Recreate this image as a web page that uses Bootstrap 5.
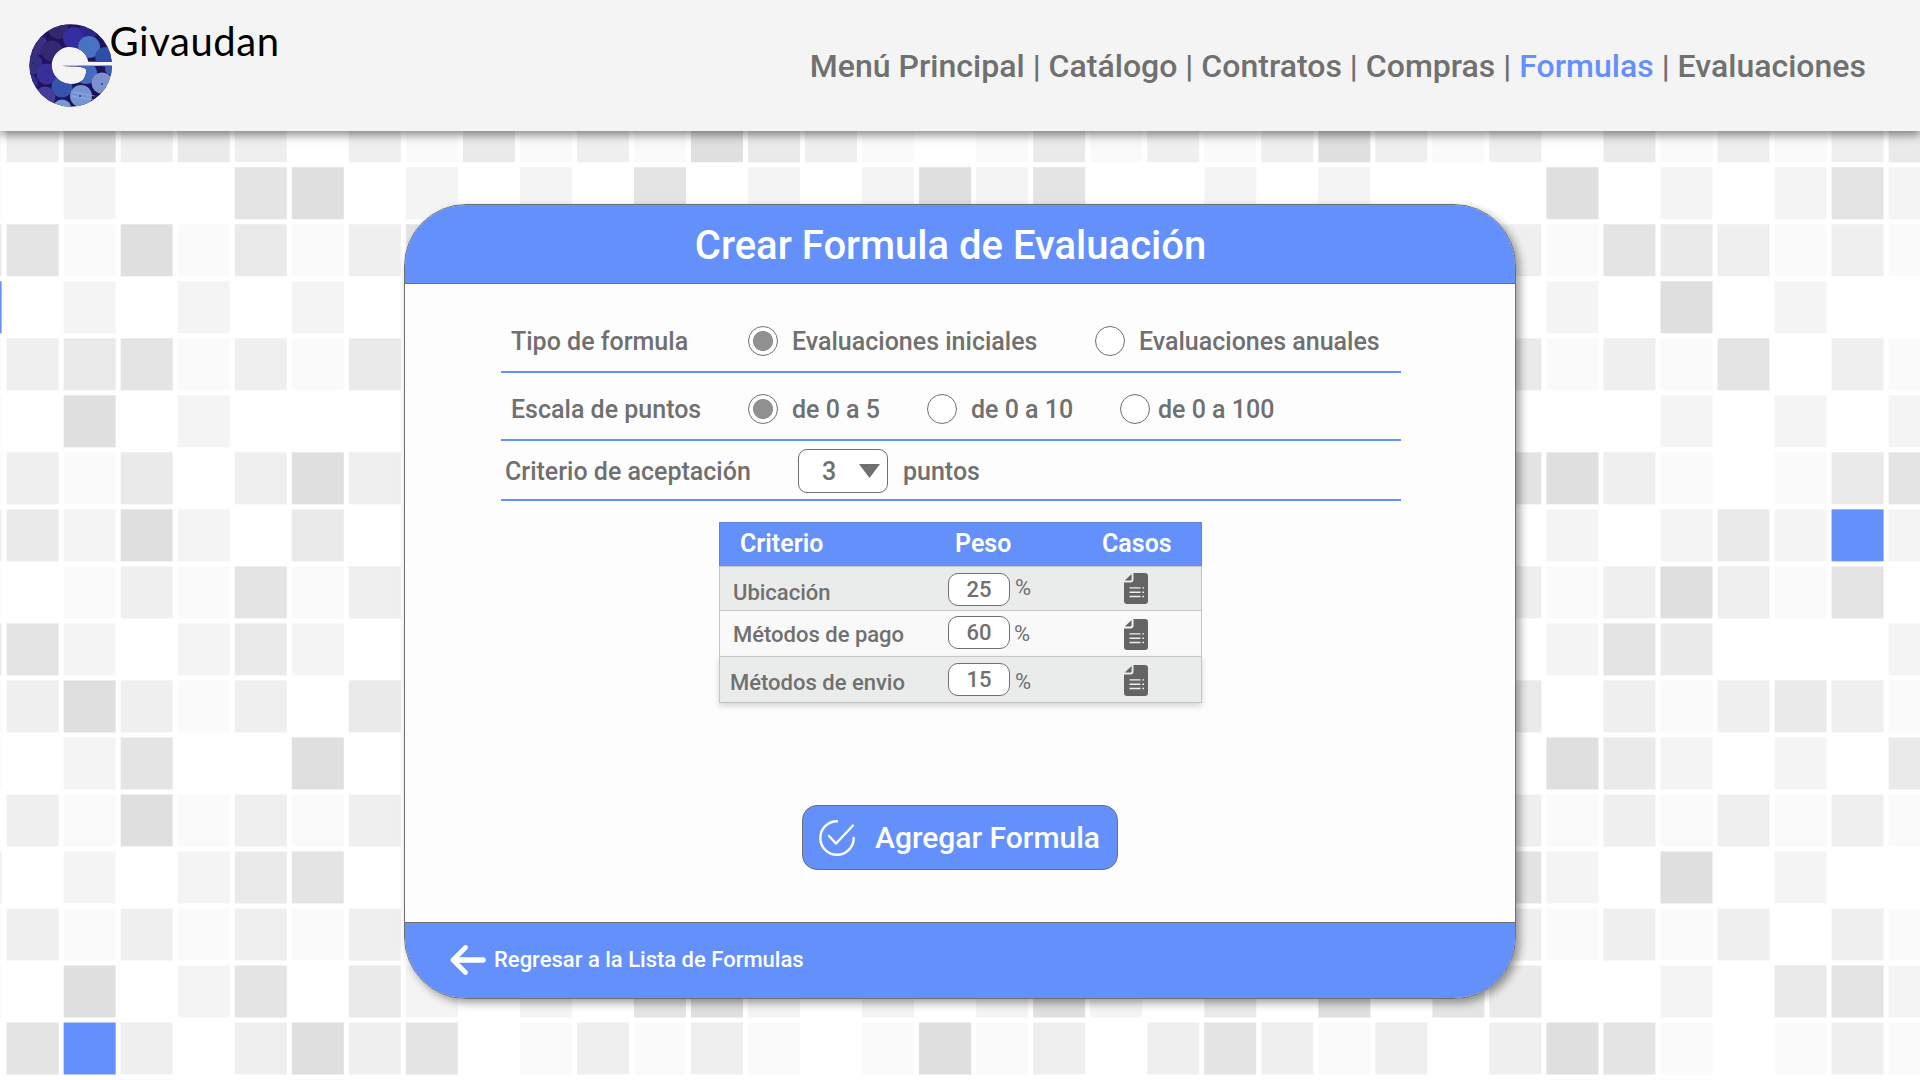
<!DOCTYPE html>
<html lang="es">
<head>
<meta charset="utf-8">
<meta name="viewport" content="width=device-width, initial-scale=1">
<title>Crear Formula de Evaluación</title>
<link href="https://cdn.jsdelivr.net/npm/bootstrap@5.3.0/dist/css/bootstrap.min.css" rel="stylesheet">
<style>
  :root { --brand: #6490fc; --ink: #707070; }
  body { width: 1920px; height: 1080px; overflow: hidden; background: #fff; color: var(--ink);
         font-family: Roboto, "Liberation Sans", sans-serif; font-weight: 500; }
  .mosaic { position: absolute; inset: 0; z-index: -1; }
  .topbar { height: 131px; background: #f4f4f4; padding: 0 54px 0 28px; box-shadow: 0 4px 9px rgba(0,0,0,.46); }
  .brand-logo { margin-top: 18px; }
  .menu { font-size: 32px; line-height: 40px; white-space: pre; letter-spacing: .016px; }
  .menu a { color: inherit; text-decoration: none; }
  .menu a.current { color: var(--brand); }
  .panel { width: 1112px; height: 795px; margin: 73px 0 0 404px; border: 1px solid var(--ink); border-radius: 62px;
           background: #fdfdfd; overflow: hidden; box-shadow: 4px 4px 8px rgba(0,0,0,.38); }
  .panel-top { height: 79px; background: var(--brand); border-bottom: 1px solid var(--ink); padding: 3px 19px 0 0; }
  .panel-top h1 { font-size: 40px; line-height: 48px; font-weight: 500; }
  .panel-bottom { height: 76px; background: var(--brand); border-top: 1px solid var(--ink); padding: 0 0 2px 45px; }
  .panel-bottom a { font-size: 22px; line-height: 28px; }
  .panel-main { padding: 27px 96px 0; }
  .field { width: 900px; border-bottom: 2px solid var(--brand); font-size: 25px; line-height: 30px; }
  .f1 { height: 62px; padding: 0 0 0 10px; }
  .f2 { height: 68px; padding: 6px 0 0 10px; }
  .f3 { height: 60px; padding: 2px 0 0 4px; }
  .f1 .caption, .f2 .caption { width: 237px; }
  .f3 .caption { width: 293px; }
  .txt { padding-top: 2px; }
  .dot { appearance: none; width: 30px; height: 30px; margin: 0 14px 0 0; border: 1px solid var(--ink); border-radius: 50%; background: #fff; flex: none; }
  .dot:checked { background: radial-gradient(circle, #909090 9.6px, #fff 10.4px); }
  .opt-a { width: 347px; } .opt-b { width: 179px; } .opt-c { width: 193px; }
  .dot.tight { margin-right: 8px; }
  .picker { width: 90px; height: 44px; margin-right: 15px; border: 1px solid var(--ink); border-radius: 9px; background: #fff;
            color: var(--ink); padding: 0 7px 0 23px; font-size: 25px; font-weight: 500; }
  .criteria { width: 483px; margin: 21px 0 0 218px; font-size: 22px; line-height: 26px; }
  .criteria-head { height: 44px; background: var(--brand); border: 1px solid #6283d8; border-bottom: 0; color: #fff; font-size: 25px; font-weight: 600; padding: 0 0 2px 20px; }
  .criteria-head .h1c { width: 215px; } .criteria-head .h2c { width: 147px; }
  .line { border: 1px solid #c4c6c6; border-top-width: 1px; border-bottom: 0; background: #eaecec; }
  .line:last-child { border-bottom: 1px solid #c0c2c2; box-shadow: 0 3px 6px rgba(0,0,0,.16); }
  .line.pale { background: #f9f9f9; }
  .r1 { height: 44px; } .r2 { height: 46px; } .r3 { height: 47px; }
  .c-name { width: 228px; padding-left: 13px; }
  .c-weight { width: 176px; }
  .weight { width: 62px; height: 33px; border: 1px solid var(--ink); border-radius: 10px; background: #fff; color: var(--ink);
            font-size: 22px; font-weight: 500; text-align: center; padding: 0; }
  .pct { font-size: 22px; font-weight: 400; margin-left: 5px; }
  .r1 .c-name { padding-top: 13px; } .r1 .weight { margin-top: 6px; } .r1 .pct { margin-top: 8px; } .r1 svg { margin-top: 6px; }
  .r2 .c-name { padding-top: 11px; } .r2 .weight { margin-top: 5px; } .r2 .pct { margin-top: 10px; margin-left: 4px; } .r2 svg { margin-top: 8px; }
  .r3 .c-name { padding: 13px 0 0 10px; } .r3 .weight { margin-top: 6px; } .r3 .pct { margin-top: 12px; } .r3 svg { margin-top: 8px; }
  .add { width: 316px; height: 65px; margin: 102px 0 0 301px; background: var(--brand); border: 1px solid var(--ink); border-radius: 15px;
         color: #fff; font-size: 30px; line-height: 36px; font-weight: 500; padding: 0 0 0 14px; }
  .add svg { margin-right: 18px; }
</style>
</head>
<body>
<svg class="mosaic" id="mosaic" width="1920" height="1080"></svg>

<header class="topbar d-flex justify-content-between align-items-center">
  <svg class="brand-logo align-self-start" width="260" height="96" viewBox="28 18 260 96" role="img" aria-label="Givaudan">
    <defs><clipPath id="wheel"><path d="M111.830 61.700A41.300 41.300 0 0 0 29.400 65.200A41.300 41.300 0 0 0 112 65.700L62 65.800Q66 66.500 73 66.400Q86 66.200 86.300 70.200Q86 83.700 70.500 83.900A18.500 18.500 0 1 1 88.300 61.700Z"/></clipPath></defs>
    <g clip-path="url(#wheel)">
      <path fill="#21135e" d="M28 22h86v86H28z"/>
      <circle cx="38" cy="45" r="10" fill="#3b2e82"/><circle cx="58" cy="29" r="10" fill="#37286f"/>
      <circle cx="52" cy="51" r="10.500" fill="#342873"/><circle cx="74" cy="38" r="11" fill="#362da0"/>
      <circle cx="32" cy="64" r="10.500" fill="#35307f"/><circle cx="47" cy="74" r="10.500" fill="#3a2f99"/>
      <circle cx="90" cy="28" r="10" fill="#2e2588"/><circle cx="89" cy="47" r="11" fill="#4b72c2"/>
      <circle cx="105" cy="57" r="10" fill="#2f4da6"/><circle cx="86" cy="73" r="11" fill="#476bbd"/>
      <circle cx="62" cy="87" r="10.500" fill="#3755ae"/><circle cx="102" cy="83" r="10.500" fill="#7c91d1"/>
      <circle cx="81" cy="96" r="11" fill="#7594d3"/><circle cx="45" cy="97" r="10.500" fill="#463c9c"/>
      <circle cx="29" cy="83" r="9" fill="#30308a"/><circle cx="62" cy="109" r="9.500" fill="#779ad3"/>
      <circle cx="111" cy="69" r="6" fill="#3d5eb3"/>
      <path d="M73 92l22 4M72 96l22 4" stroke="#a7bbe5" stroke-width="1.200" opacity=".6"/>
      <g fill="#1c1852" opacity=".7"><circle cx="41" cy="51" r=".8"/><circle cx="33" cy="63" r=".8"/><circle cx="59" cy="30" r=".8"/><circle cx="48" cy="72" r=".8"/><circle cx="80" cy="96" r="1"/><circle cx="102" cy="84" r="1"/></g>
    </g>
    <text x="109.500" y="56.200" font-family="Lato, sans-serif" font-size="40" font-weight="400" fill="#000" textLength="169.500" lengthAdjust="spacing">Givaudan</text>
  </svg>
  <nav class="menu"><a href="#">Menú Principal</a> | <a href="#">Catálogo</a> | <a href="#">Contratos</a> | <a href="#">Compras</a> | <a href="#" class="current">Formulas</a> | <a href="#">Evaluaciones</a></nav>
</header>

<main class="panel d-flex flex-column">
  <div class="panel-top d-flex justify-content-center align-items-center text-white"><h1 class="m-0">Crear Formula de Evaluación</h1></div>
  <form class="panel-main flex-grow-1">
    <div class="field f1 d-flex align-items-center">
      <span class="caption txt">Tipo de formula</span>
      <label class="opt-a d-flex align-items-center"><input class="dot" type="radio" name="tipo" checked><span class="txt">Evaluaciones iniciales</span></label>
      <label class="d-flex align-items-center"><input class="dot" type="radio" name="tipo"><span class="txt">Evaluaciones anuales</span></label>
    </div>
    <div class="field f2 d-flex align-items-center">
      <span class="caption txt">Escala de puntos</span>
      <label class="opt-b d-flex align-items-center"><input class="dot" type="radio" name="escala" checked><span class="txt">de 0 a 5</span></label>
      <label class="opt-c d-flex align-items-center"><input class="dot" type="radio" name="escala"><span class="txt">de 0 a 10</span></label>
      <label class="d-flex align-items-center"><input class="dot tight" type="radio" name="escala"><span class="txt">de 0 a 100</span></label>
    </div>
    <div class="field f3 d-flex align-items-center">
      <span class="caption txt">Criterio de aceptación</span>
      <button type="button" class="picker d-flex align-items-center justify-content-between"><span class="txt">3</span><svg width="21" height="14"><path d="M0 0h21L10.500 14z" fill="#707070"/></svg></button>
      <span class="txt">puntos</span>
    </div>

    <div class="criteria">
      <div class="criteria-head d-flex align-items-center"><span class="h1c">Criterio</span><span class="h2c">Peso</span><span>Casos</span></div>
      <div class="line r1 d-flex align-items-start">
        <span class="c-name">Ubicación</span>
        <span class="c-weight d-flex align-items-start"><input class="weight" value="25"><span class="pct">%</span></span>
        <svg width="24" height="31"><use href="#doc"/></svg>
      </div>
      <div class="line pale r2 d-flex align-items-start">
        <span class="c-name">Métodos de pago</span>
        <span class="c-weight d-flex align-items-start"><input class="weight" value="60"><span class="pct">%</span></span>
        <svg width="24" height="31"><use href="#doc"/></svg>
      </div>
      <div class="line r3 d-flex align-items-start">
        <span class="c-name">Métodos de envio</span>
        <span class="c-weight d-flex align-items-start"><input class="weight" value="15"><span class="pct">%</span></span>
        <svg width="24" height="31"><use href="#doc"/></svg>
      </div>
    </div>

    <button type="button" class="add d-flex align-items-center">
      <svg width="40" height="40" viewBox="0 0 40 40" fill="none" stroke="#fff" stroke-width="2.400" stroke-linecap="round" stroke-linejoin="round"><path d="M20 3.300A16.700 16.700 0 1 0 36.700 20M12 18l7 7.500L36 7.500"/></svg>Agregar Formula
    </button>
  </form>
  <div class="panel-bottom d-flex align-items-center">
    <a href="#" class="d-flex align-items-center text-white text-decoration-none">
      <svg width="36" height="30" viewBox="0 0 36 30" fill="none" stroke="#fff" stroke-linecap="round" stroke-linejoin="round" class="me-2"><path d="M15.500 2.500L3 15l12.500 12.500" stroke-width="4.600"/><path d="M4 15h29" stroke-width="5.400"/></svg>Regresar a la Lista de Formulas
    </a>
  </div>
</main>

<svg width="0" height="0" class="position-absolute">
  <symbol id="doc" viewBox="0 0 24 31">
    <path fill="#646464" d="M9.500 0H21a3 3 0 0 1 3 3v25a3 3 0 0 1-3 3H3a3 3 0 0 1-3-3V9.500h6.500a3 3 0 0 0 3-3zM7.600 1v5.300a1.300 1.300 0 0 1-1.300 1.300H.8z"/>
    <path stroke="#eee" stroke-width="1.400" d="M5.500 14.900H16.500M5.500 19.200H16.500M5.500 23.500H16.500M18.300 14.900H20M18.300 19.200H20M18.300 23.500H20"/>
  </symbol>
</svg>

<script>
  // Background tiles: one string per row, 0 = empty, 1-6 = light to dark gray, B = blue
  const shades = {1:'#fafafa', 2:'#f4f4f4', 3:'#efefef', 4:'#eaeaea', 5:'#e4e4e4', 6:'#dfdfdf', B:'#6490fc'};
  const blank = '0'.repeat(18);
  const rows = [
    '13634303' + '1413164310141313631' + '30413134',
    '10200560' + '2020502026250020200' + '06020252',
    '45161413' + '5' + blank + '31543131',
    'B0202020' + '0' + blank + '02060200',
    '13451314' + '0' + blank + '41315031',
    '10602000' + '0' + blank + '00020202',
    '13140363' + '0' + blank + '56310145',
    '34262040' + '0' + blank + '020242B2',
    '10131513' + '0' + blank + '31363150',
    '45202420' + '0' + blank + '02540002',
    '13631304' + '0' + blank + '40313431',
    '10250060' + '0' + blank + '06420204',
    '03161313' + '0' + blank + '31313131',
    '30202450' + '0' + blank + '52060200',
    '13131313' + '0' + blank + '31313031',
    '10602504' + '2020562020262040605'  + '40020452',
    '05B30363' + '5013131016130353130' + '36510131',
    '00030020' + '0000000000000000000' + '02020000'
  ];
  const mosaic = document.getElementById('mosaic');
  rows.forEach((row, r) => [...row].forEach((s, c) => {
    if (s === '0') return;
    const tile = document.createElementNS('http://www.w3.org/2000/svg', 'rect');
    tile.setAttribute('x', -50.4 + 57.03 * c);
    tile.setAttribute('y', 110.2 + 57.02 * r);
    tile.setAttribute('width', 52);
    tile.setAttribute('height', 52);
    tile.setAttribute('fill', shades[s]);
    mosaic.appendChild(tile);
  }));
</script>
<script src="https://cdn.jsdelivr.net/npm/bootstrap@5.3.0/dist/js/bootstrap.bundle.min.js"></script>
</body>
</html>
